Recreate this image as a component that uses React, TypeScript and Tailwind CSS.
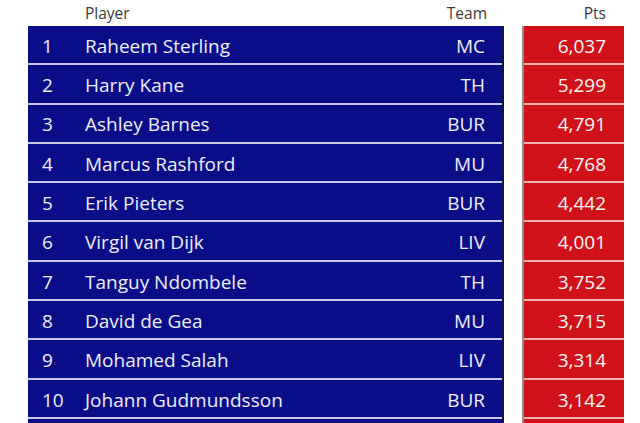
import React from "react";

const rows: [number, string, string, string][] = [
  [1, "Raheem Sterling", "MC", "6,037"],
  [2, "Harry Kane", "TH", "5,299"],
  [3, "Ashley Barnes", "BUR", "4,791"],
  [4, "Marcus Rashford", "MU", "4,768"],
  [5, "Erik Pieters", "BUR", "4,442"],
  [6, "Virgil van Dijk", "LIV", "4,001"],
  [7, "Tanguy Ndombele", "TH", "3,752"],
  [8, "David de Gea", "MU", "3,715"],
  [9, "Mohamed Salah", "LIV", "3,314"],
  [10, "Johann Gudmundsson", "BUR", "3,142"],
];

export default function App() {
  return (
    <div
      className="w-[640px] h-[423px] overflow-hidden bg-white flex items-start pl-[28px]"
      style={{ fontFamily: '"Open Sans", "Noto Sans", sans-serif' }}
    >
      <div className="w-[476px] shrink-0 flex flex-col">
        <div className="h-[26px] shrink-0 flex items-center justify-between pl-[57px] pr-[17px] pt-[2px] text-[15.5px] text-[#3a3a3a]">
          <span>Player</span>
          <span>Team</span>
        </div>
        <div className="bg-[#0a0d88] border-r-2 border-[#15153a]">
          {rows.map(([n, name, team]) => (
            <div
              key={n}
              className="h-[39.3px] flex items-center pt-[3px] border-b-2 border-[#c9c9e6] text-[19px] text-[#eeeef4] pr-[17px]"
            >
              <span className="w-[57px] pl-[14px]">{n}</span>
              <span className="flex-1">{name}</span>
              <span>{team}</span>
            </div>
          ))}
          <div className="h-[20px]" />
        </div>
      </div>
      <div className="w-[102px] shrink-0 ml-[18px] flex flex-col">
        <div className="h-[26px] shrink-0 flex items-center justify-end pt-[2px] pr-[18px] text-[15.5px] text-[#3a3a3a]">
          <span>Pts</span>
        </div>
        <div className="bg-[#d0111a] border-l-2 border-[#8c8c8c]">
          {rows.map(([n, , , pts]) => (
            <div
              key={n}
              className="h-[39.3px] flex items-center justify-end pt-[3px] border-b-2 border-[#f0b4b4] text-[19px] text-[#f7f7f7] pr-[18px]"
            >
              {pts}
            </div>
          ))}
          <div className="h-[20px]" />
        </div>
      </div>
    </div>
  );
}
